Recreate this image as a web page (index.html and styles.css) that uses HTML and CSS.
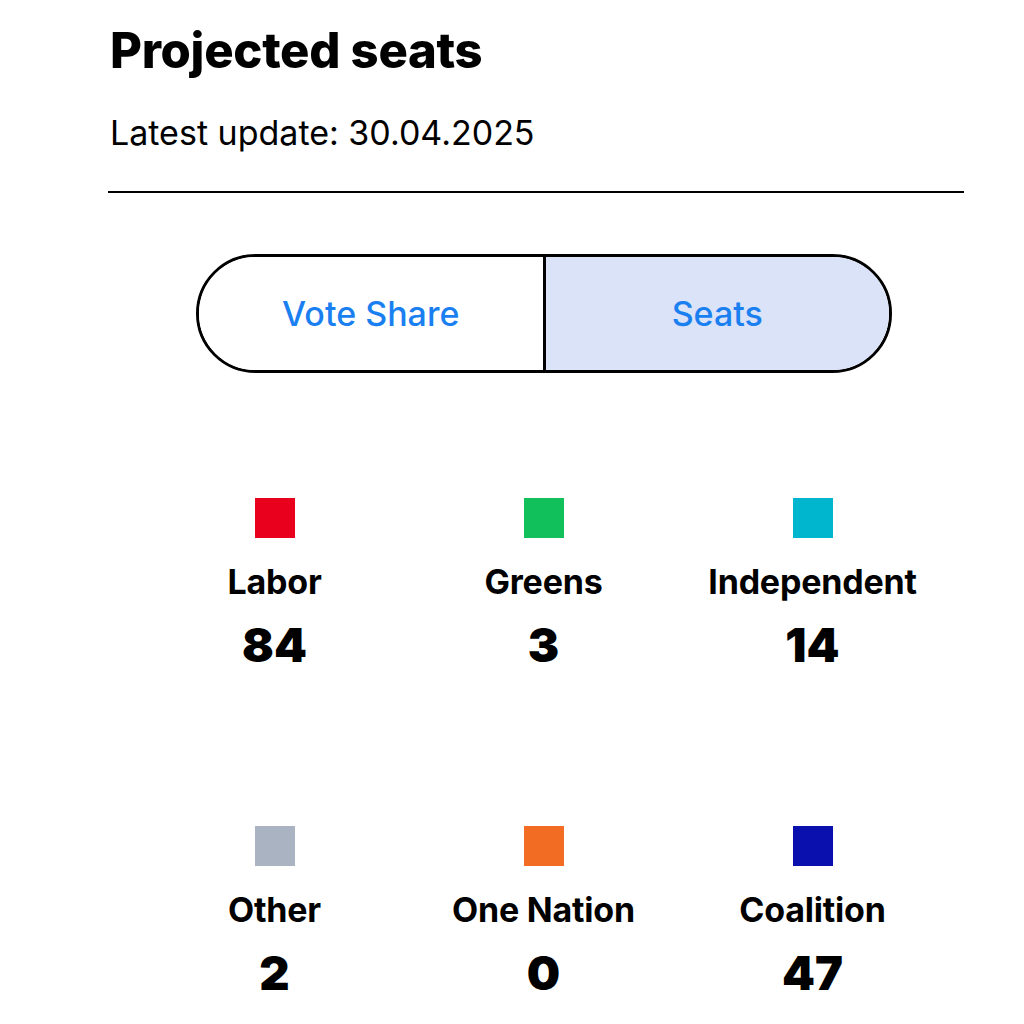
FILE: index.html
```html
<!DOCTYPE html>
<html>
<head>
<meta charset="utf-8">
<link rel="stylesheet" href="styles.css">
</head>
<body>
<div class="page">
  <h1 class="title">Projected seats</h1>
  <p class="updated">Latest update: 30.04.2025</p>
  <hr class="rule">
  <div class="toggle">
    <div class="tab">Vote Share</div>
    <div class="tab active">Seats</div>
  </div>
  <div class="grid">
    <div class="party"><span class="swatch labor"></span><div class="name">Labor</div><div class="num">84</div></div>
    <div class="party"><span class="swatch greens"></span><div class="name">Greens</div><div class="num">3</div></div>
    <div class="party"><span class="swatch ind"></span><div class="name">Independent</div><div class="num">14</div></div>
    <div class="party"><span class="swatch other"></span><div class="name">Other</div><div class="num">2</div></div>
    <div class="party"><span class="swatch onenation"></span><div class="name">One Nation</div><div class="num">0</div></div>
    <div class="party"><span class="swatch coalition"></span><div class="name">Coalition</div><div class="num">47</div></div>
  </div>
</div>
</body>
</html>
```
FILE: styles.css
```css
html, body {
  margin: 0;
  padding: 0;
  background: #fff;
}
body {
  font-family: Inter, "Liberation Sans", Arial, sans-serif;
  color: #000;
}
.page {
  width: 856px;
  padding-left: 110px;
  padding-top: 23px;
}
.title {
  margin: 0;
  font-size: 49px;
  line-height: 56px;
  font-weight: 800;
  letter-spacing: -0.3px;
}
.updated {
  margin: 0;
  margin-top: 34px;
  font-size: 34px;
  line-height: 40px;
  font-weight: 400;
}
.rule {
  margin: 38px 0 0 -2px;
  border: 0;
  height: 2px;
  background: #000;
  width: 856px;
}
.toggle {
  margin: 61px 0 0 86px;
  width: 690px;
  height: 113px;
  border: 3px solid #000;
  border-radius: 60px;
  display: flex;
  overflow: hidden;
}
.tab {
  flex: 1;
  display: flex;
  align-items: center;
  justify-content: center;
  font-size: 34px;
  font-weight: 500;
  color: #1a7ff0;
  background: #fff;
}
.tab.active {
  background: #dae3f7;
  border-left: 3px solid #000;
}
.grid {
  margin: 125px 0 0 30px;
  display: grid;
  grid-template-columns: repeat(3, 269px);
  row-gap: 155px;
}
.party {
  display: flex;
  flex-direction: column;
  align-items: center;
}
.swatch {
  width: 40px;
  height: 40px;
  display: block;
}
.labor { background: #e8001c; }
.greens { background: #12c05b; }
.ind { background: #00b6cf; }
.other { background: #aab3c2; }
.onenation { background: #f26c24; }
.coalition { background: #0a10ae; }
.name {
  margin-top: 26px;
  font-size: 34px;
  line-height: 36px;
  font-weight: 700;
  letter-spacing: -0.2px;
}
.num {
  margin-top: 19px;
  font-size: 47px;
  line-height: 52px;
  font-weight: 900;
}
```
